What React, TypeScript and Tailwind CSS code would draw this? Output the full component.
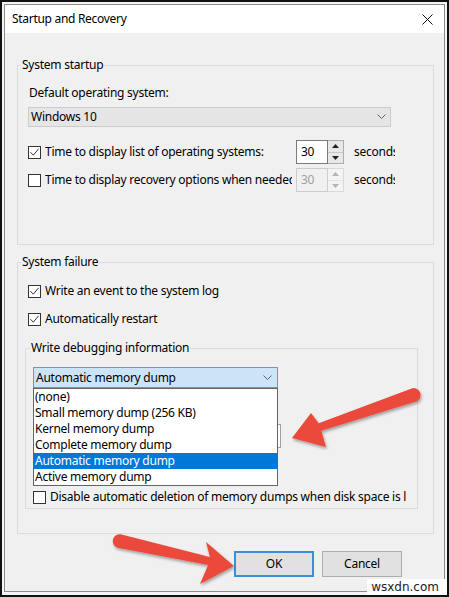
import React from "react";

function Check({ checked }: { checked?: boolean }) {
  return (
    <span className="w-[13px] h-[13px] border border-[#333333] bg-white flex items-center justify-center shrink-0">
      {checked && (
        <svg width="11" height="11" viewBox="0 0 11 11">
          <path d="M1.5 5.2 L4.3 8.2 L9.6 1.8" stroke="#333" fill="none" strokeWidth="1" />
        </svg>
      )}
    </span>
  );
}

function Spin({ disabled }: { disabled?: boolean }) {
  const tri = disabled ? "#b5b5b5" : "#222";
  return (
    <div className="flex h-[24px] shrink-0">
      <div
        className={
          disabled
            ? "w-[32px] h-full border border-[#cccccc] bg-[#f0f0f0] text-[#a0a0a0] flex items-center pl-[4px]"
            : "w-[32px] h-full border border-[#7a7a7a] bg-white text-black flex items-center pl-[4px]"
        }
      >
        30
      </div>
      <div
        className={
          disabled
            ? "w-[16px] h-full flex flex-col border-y border-r border-[#d9d9d9] bg-[#f0f0f0]"
            : "w-[16px] h-full flex flex-col border-y border-r border-[#adadad] bg-[#f0f0f0]"
        }
      >
        <div className={disabled ? "flex-1 flex items-center justify-center border-b border-[#e3e3e3] bg-[#f4f4f4]" : "flex-1 flex items-center justify-center border-b border-[#c8c8c8] bg-[#e8e8e8]"}>
          <svg width="7" height="4" viewBox="0 0 7 4"><path d="M3.5 0 L7 4 L0 4 Z" fill={tri} /></svg>
        </div>
        <div className={disabled ? "flex-1 flex items-center justify-center bg-[#f4f4f4]" : "flex-1 flex items-center justify-center bg-[#e8e8e8]"}>
          <svg width="7" height="4" viewBox="0 0 7 4"><path d="M0 0 L7 0 L3.5 4 Z" fill={tri} /></svg>
        </div>
      </div>
    </div>
  );
}

function Chevron() {
  return (
    <svg width="9" height="6" viewBox="0 0 9 6">
      <path d="M0.5 0.5 L4.5 4.5 L8.5 0.5" stroke="#606060" fill="none" strokeWidth="1" />
    </svg>
  );
}

export default function App() {
  const items = [
    "(none)",
    "Small memory dump (256 KB)",
    "Kernel memory dump",
    "Complete memory dump",
    "Automatic memory dump",
    "Active memory dump",
  ];
  return (
    <div className="relative w-[449px] h-[597px] overflow-hidden border-2 border-[#111111] bg-[#f5f5f5] pl-[2px] pt-[2px] font-['Noto_Sans',sans-serif] text-[12px] leading-[16px] tracking-[-0.25px] text-black">
      {/* dialog */}
      <div className="w-[441px] h-[588px] border border-[#8c8c8c] flex flex-col bg-[#f0f0f0]">
        {/* title bar */}
        <div className="h-[28px] bg-white flex items-center justify-between pl-[7px] pr-[11px] shrink-0">
          <span className="text-[12px] tracking-[-0.3px]">Startup and Recovery</span>
          <svg width="11" height="11" viewBox="0 0 11 11">
            <path d="M0.5 0.5 L10.5 10.5 M10.5 0.5 L0.5 10.5" stroke="#111" strokeWidth="1" />
          </svg>
        </div>
        {/* body */}
        <div className="flex flex-col pl-[12px]">
          {/* System startup */}
          <fieldset className="mt-[24px] w-[417px] border border-[#dcdcdc] pl-[3px] pb-[52px]">
            <legend className="px-[1px] leading-[16px]">System startup</legend>
            <div className="flex flex-col pl-[7px]">
              <div className="mt-[12px] h-[16px] pl-[1px]">Default operating system:</div>
              <div className="mt-[6px] w-[363px] h-[20px] border border-[#cccccc] bg-[#e5e5e5] flex items-center justify-between pl-[2px] pr-[4px]">
                <span>Windows 10</span>
                <Chevron />
              </div>
              <div className="mt-[13px] flex items-center h-[24px]">
                <Check checked />
                <span className="ml-[4px] w-[248px] whitespace-nowrap overflow-hidden">Time to display list of operating systems:</span>
                <div className="ml-[3px]"><Spin /></div>
                <span className="ml-[10px] w-[41px] whitespace-nowrap overflow-hidden">seconds</span>
              </div>
              <div className="mt-[4px] flex items-center h-[24px]">
                <Check />
                <span className="ml-[4px] w-[247px] whitespace-nowrap overflow-hidden">Time to display recovery options when needed:</span>
                <div className="ml-[4px]"><Spin disabled /></div>
                <span className="ml-[10px] w-[41px] whitespace-nowrap overflow-hidden">seconds</span>
              </div>
            </div>
          </fieldset>

          {/* System failure */}
          <fieldset className="mt-[9px] w-[417px] border border-[#dcdcdc] pl-[3px] pb-[24px]">
            <legend className="px-[1px] leading-[16px]">System failure</legend>
            <div className="flex flex-col">
              <div className="mt-[13px] flex items-center h-[16px] pl-[7px]">
                <Check checked />
                <span className="ml-[4px]">Write an event to the system log</span>
              </div>
              <div className="mt-[12px] flex items-center h-[16px] pl-[7px]">
                <Check checked />
                <span className="ml-[4px]">Automatically restart</span>
              </div>
              <fieldset className="mt-[13px] ml-[4px] w-[393px] border border-[#dcdcdc] pl-[4px] pb-[3px]">
                <legend className="px-[1px] leading-[16px]">Write debugging information</legend>
                <div className="flex flex-col pl-[3px]">
                  <div className="relative mt-[11px] w-[245px]">
                    <div className="h-[21px] border border-[#5a9ee0] bg-[#cce4f7] flex items-center justify-between pl-[2px] pr-[5px]">
                      <span>Automatic memory dump</span>
                      <Chevron />
                    </div>
                    {/* open dropdown list */}
                    <div className="absolute top-full left-0 w-full z-10 border border-[#646464] bg-white flex flex-col">
                      {items.map((it) => (
                        <div
                          key={it}
                          className={
                            it === "Automatic memory dump"
                              ? "h-[16px] pl-[1px] bg-[#0078d7] text-white whitespace-nowrap"
                              : "h-[16px] pl-[1px] whitespace-nowrap"
                          }
                        >
                          {it}
                        </div>
                      ))}
                    </div>
                  </div>
                  <div className="mt-[8px] h-[16px]">Dump file:</div>
                  <div className="mt-[12px] w-[248px] h-[24px] border border-[#a0a0a0] bg-white flex items-center pl-[3px]">%SystemRoot%\MEMORY.DMP</div>
                  <div className="mt-[10px] flex items-center h-[16px]">
                    <Check checked />
                    <span className="ml-[4px]">Overwrite any existing file</span>
                  </div>
                  <div className="mt-[15px] flex items-center h-[16px]">
                    <Check />
                    <span className="ml-[4px] w-[356px] whitespace-nowrap overflow-hidden">Disable automatic deletion of memory dumps when disk space is low</span>
                  </div>
                </div>
              </fieldset>
            </div>
          </fieldset>

          {/* buttons */}
          <div className="mt-[17px] flex justify-end gap-[8px] pr-[42px]">
            <div className="w-[80px] h-[26px] border-2 border-[#3c8ddb] bg-[#e1e1e1] flex items-center justify-center">OK</div>
            <div className="w-[80px] h-[26px] border border-[#adadad] bg-[#e1e1e1] flex items-center justify-center">Cancel</div>
          </div>
        </div>
      </div>

      {/* red arrows */}
      <svg className="absolute left-0 top-0 z-20 pointer-events-none" width="449" height="597" viewBox="-2 -2 449 597">
        <defs>
          <filter id="sh" x="-20%" y="-20%" width="140%" height="140%">
            <feDropShadow dx="1" dy="2" stdDeviation="1.5" floodColor="#000" floodOpacity="0.35" />
          </filter>
        </defs>
        <path
          d="M288 434 L307 409 L314.7 419.2 L407.7 384.4 A7 7 0 0 1 412.3 397.6 L317.3 426.8 L322 443 Z"
          fill="#ec4a3d"
          filter="url(#sh)"
        />
        <path
          d="M230 562 L202 538 L205.9 553.1 L116.5 530.2 A7 7 0 0 0 113.5 543.8 L204.1 560.9 L196 580 Z"
          fill="#ec4a3d"
          filter="url(#sh)"
        />
      </svg>

      {/* watermark */}
      <div className="absolute right-0 bottom-0 z-30 bg-white pl-[4px] pr-[8px] pt-[1px] pb-[1px] font-['DejaVu_Sans',sans-serif] text-[12px] leading-[14px] tracking-normal text-[#222]">
        wsxdn.com
      </div>
    </div>
  );
}
